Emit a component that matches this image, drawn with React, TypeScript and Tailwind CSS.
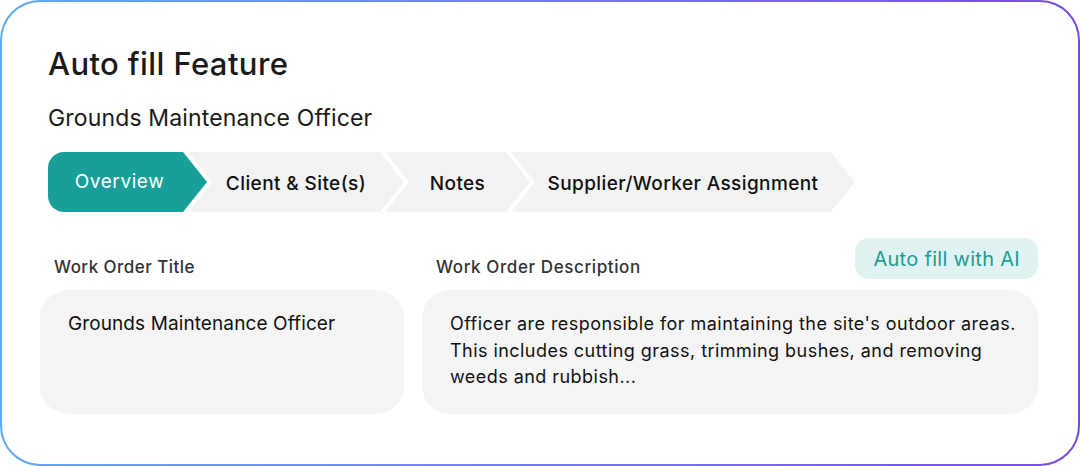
import React from "react";

const steps = [
  { label: "Overview", width: "w-[159px]", active: true },
  { label: "Client & Site(s)", width: "w-[216px]", active: false },
  { label: "Notes", width: "w-[145px]", active: false },
  { label: "Supplier/Worker Assignment", width: "w-[344px]", active: false },
];

export default function App() {
  return (
    <div className="w-[1080px] h-[466px] bg-white font-['Inter',sans-serif]">
      <div className="h-full rounded-[40px] bg-gradient-to-r from-[#5faaf4] to-[#7a48e2] p-[2px]">
        <div className="h-full rounded-[38px] bg-white pl-[38px] pr-[38px] pt-[44px]">
          <h1 className="ml-[8px] text-[31px] leading-[36px] font-medium text-[#1a1a1a] tracking-[0.4px]">
            Auto fill Feature
          </h1>
          <p className="ml-[8px] mt-[22px] text-[23px] leading-[28px] text-[#1a1a1a] tracking-[0.15px]">
            Grounds Maintenance Officer
          </p>

          <Stepper />

          <div className="mt-[26px] grid grid-cols-[364px_616px] gap-x-[18px]">
            <div className="flex items-end pl-[14px]">
              <span className="text-[17px] leading-6 font-medium text-[#333] tracking-[0.45px]">
                Work Order Title
              </span>
            </div>
            <div className="flex items-end justify-between pl-[14px]">
              <span className="text-[17px] leading-6 font-medium text-[#333] tracking-[0.6px]">
                Work Order Description
              </span>
              <button className="h-[41px] rounded-[14px] bg-[#e0f2f1] px-[18px] text-[20px] text-[#1a9c95] tracking-[0.3px]">
                Auto fill with AI
              </button>
            </div>

            <div className="mt-[11px] h-[124px] rounded-[28px] bg-[#f5f5f5] pl-[28px] pt-[21px] text-[19px] leading-[26px] text-[#111] tracking-[0.1px]">
              Grounds Maintenance Officer
            </div>
            <div className="mt-[11px] h-[124px] rounded-[28px] bg-[#f5f5f5] pl-[28px] pt-[21px] text-[18px] leading-[26.5px] text-[#111] tracking-[0.45px]">
              <p className="whitespace-nowrap">
                Officer are responsible for maintaining the site's outdoor areas.
              </p>
              <p className="whitespace-nowrap">
                This includes cutting grass, trimming bushes, and removing
              </p>
              <p className="whitespace-nowrap">weeds and rubbish...</p>
            </div>
          </div>
        </div>
      </div>
    </div>
  );
}

function Stepper() {
  return (
    <div className="ml-[8px] mt-[20px] flex h-[60px]">
      {steps.map((s, i) =>
        s.active ? (
          <div
            key={s.label}
            className={`${s.width} flex h-full shrink-0 items-center justify-center rounded-l-[16px] bg-[#189f99] pl-[8px] pr-[24px] pt-[1px] text-[19px] text-white tracking-[0.6px] [clip-path:polygon(0_0,calc(100%_-_24px)_0,100%_50%,calc(100%_-_24px)_100%,0_100%)]`}
          >
            {s.label}
          </div>
        ) : (
          <div
            key={s.label}
            className={`${s.width} ${i > 0 ? "-ml-[19px]" : ""} flex h-full shrink-0 items-center justify-center bg-[#f3f3f3] px-[24px] pt-[4px] text-[19px] font-medium text-[#111] tracking-[0.4px] [clip-path:polygon(0_0,calc(100%_-_24px)_0,100%_50%,calc(100%_-_24px)_100%,0_100%,24px_50%)]`}
          >
            {s.label}
          </div>
        ),
      )}
    </div>
  );
}
